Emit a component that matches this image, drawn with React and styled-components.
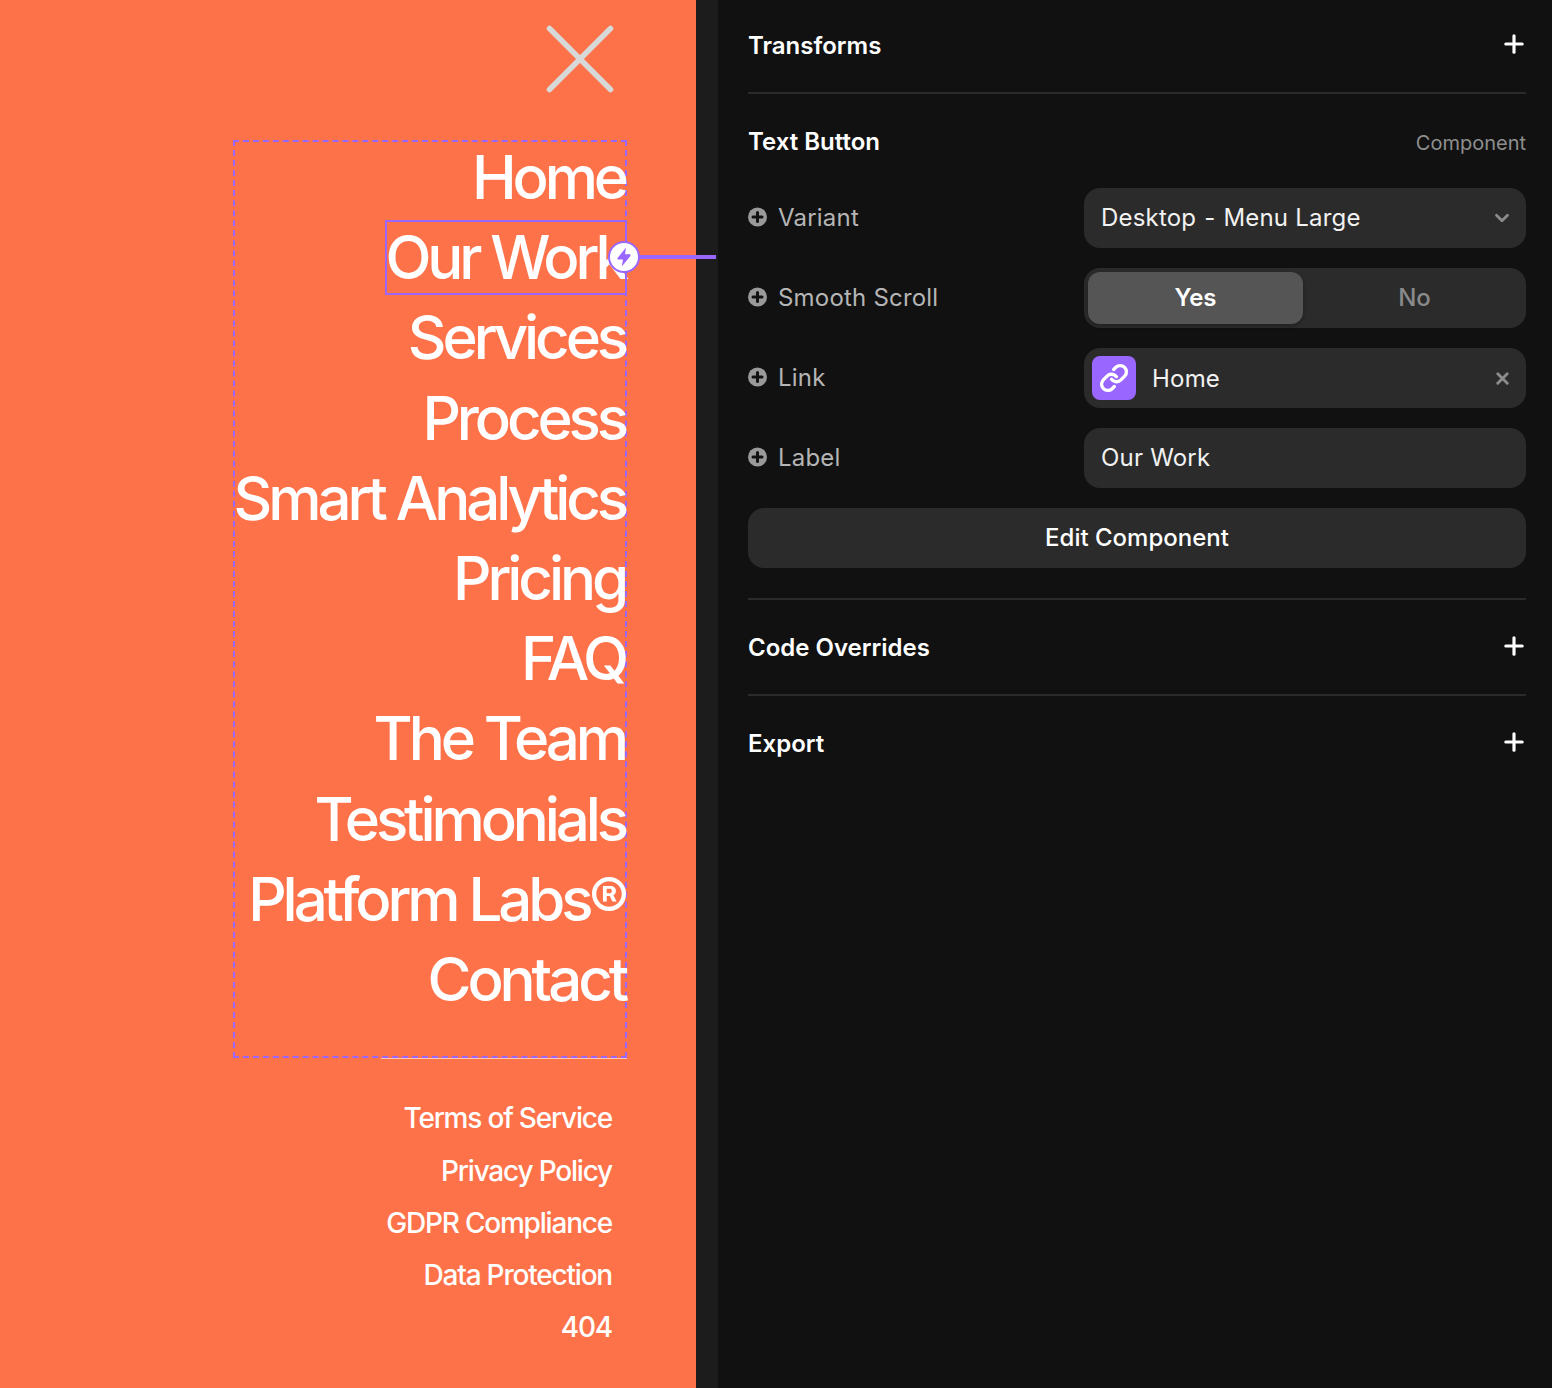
import styled, { createGlobalStyle } from "styled-components";
import { Plus, ChevronDown, X, Link } from "lucide-react";

const GlobalStyle = createGlobalStyle`
  html, body {
    margin: 0;
    padding: 0;
    background: #111111;
    font-family: "Inter", "Liberation Sans", sans-serif;
  }
`;

const Page = styled.div`
  width: 1552px;
  height: 1388px;
  display: flex;
  overflow: hidden;
`;

const Preview = styled.div`
  position: relative;
  width: 696px;
  flex-shrink: 0;
  background: #fe724a;
  display: flex;
  flex-direction: column;
  align-items: flex-end;
`;

const CloseButton = styled.svg`
  display: block;
  width: 72px;
  height: 72px;
  margin: 23px 80px 0 0;
`;

const MenuBox = styled.div`
  position: relative;
  box-sizing: border-box;
  width: 394px;
  height: 918px;
  margin: 45px 69px 0 0;
  border: 2px dashed #9966ff;
  display: flex;
  flex-direction: column;
  align-items: flex-end;
`;

const MenuItem = styled.div`
  position: relative;
  height: 80.2px;
  line-height: 72px;
  margin-top: ${(p) => (p.$first ? "-1px" : "0")};
  margin-right: -2px;
  padding-right: 2px;
  font-size: 60px;
  font-weight: 450;
  letter-spacing: -4.1px;
  color: #ffffff;
  white-space: nowrap;
`;

const Selection = styled.div`
  position: absolute;
  left: 0;
  right: 0;
  top: -1px;
  height: 75px;
  box-sizing: border-box;
  border: 2px solid #9966ff;
`;

const MenuBaseline = styled.div`
  position: absolute;
  right: -2px;
  bottom: -3px;
  width: 246px;
  height: 1px;
  background: #ffc9b6;
`;

const Bolt = styled.div`
  position: absolute;
  right: -13px;
  top: 20px;
  width: 32px;
  height: 32px;
  box-sizing: border-box;
  border-radius: 50%;
  background: #ffffff;
  border: 2px solid #9966ff;
  display: flex;
  align-items: center;
  justify-content: center;
`;

const Connector = styled.div`
  position: absolute;
  left: 640px;
  top: 255px;
  width: 76px;
  height: 4px;
  background: #9966ff;
  z-index: 2;
`;

const FooterLinks = styled.div`
  margin: 34.3px 84px 0 0;
  display: flex;
  flex-direction: column;
  align-items: flex-end;
`;

const FooterLink = styled.div`
  height: 52.3px;
  line-height: 52px;
  font-size: 28px;
  font-weight: 520;
  letter-spacing: -1.2px;
  color: #ffffff;
  white-space: nowrap;
`;

const Gutter = styled.div`
  width: 22px;
  flex-shrink: 0;
  background: #1c1c1c;
`;

const Panel = styled.div`
  flex: 1;
  box-sizing: border-box;
  padding: 0 26px 0 30px;
  background: #111111;
  color: #ffffff;
  font-size: 24px;
`;

const Section = styled.div`
  padding: ${(p) => p.$padding || "0"};
  border-bottom: ${(p) => (p.$last ? "none" : "2px solid #2b2b2b")};
`;

const SectionHead = styled.div`
  display: flex;
  align-items: center;
  justify-content: space-between;
  box-sizing: border-box;
  height: ${(p) => p.$height || 92}px;
  padding-bottom: ${(p) => p.$lift || 0}px;
`;

const SectionTitle = styled.div`
  font-size: 24px;
  font-weight: 600;
`;

const Hint = styled.div`
  margin-top: 3px;
  font-size: 20px;
  color: #8f8f8f;
`;

const Rows = styled.div`
  display: flex;
  flex-direction: column;
  gap: 20px;
`;

const Row = styled.div`
  display: flex;
  align-items: center;
  height: 60px;
`;

const RowLabel = styled.div`
  width: 336px;
  flex-shrink: 0;
  box-sizing: border-box;
  padding-bottom: 2px;
  display: flex;
  align-items: center;
  gap: 10px;
  color: #b5b5b5;
  letter-spacing: 0.2px;
`;

const Field = styled.div`
  flex: 1;
  height: 60px;
  box-sizing: border-box;
  border-radius: 16px;
  background: #2b2b2b;
  display: flex;
  align-items: center;
  gap: ${(p) => p.$gap || 0}px;
  padding: ${(p) => p.$padding || "0 13px 0 17px"};
  letter-spacing: 0.2px;
  color: #f2f2f2;
`;

const FieldText = styled.div`
  flex: 1;
  padding-bottom: ${(p) => (p.$flush ? 0 : 2)}px;
  white-space: pre;
`;

const Dash = styled.span`
  margin: 0 1px;
`;

const Segment = styled.div`
  flex: 1;
  height: 52px;
  padding-bottom: 2px;
  box-sizing: border-box;
  border-radius: 12px;
  display: flex;
  align-items: center;
  justify-content: center;
  font-weight: ${(p) => (p.$active ? 600 : 500)};
  letter-spacing: 0;
  color: ${(p) => (p.$active ? "#ffffff" : "#8a8a8a")};
  background: ${(p) => (p.$active ? "#555555" : "transparent")};
  box-shadow: ${(p) => (p.$active ? "0 2px 4px rgba(0,0,0,0.25)" : "none")};
`;

const LinkTile = styled.div`
  width: 44px;
  height: 44px;
  margin-right: 16px;
  border-radius: 8px;
  background: #9966ff;
  display: flex;
  align-items: center;
  justify-content: center;
`;

const EditButton = styled.div`
  height: 60px;
  margin-top: 20px;
  padding-bottom: 2px;
  box-sizing: border-box;
  border-radius: 16px;
  background: #2b2b2b;
  display: flex;
  align-items: center;
  justify-content: center;
  font-weight: 500;
`;

const PlusIcon = styled(Plus)`
  margin: 0 -1.5px 2px 0;
`;

const AddDot = () => (
  <svg width="20" height="20" viewBox="0 0 20 20">
    <circle cx="9.5" cy="10" r="9.5" fill="#999999" />
    <path d="M9.5 5.5v9M5 10h9" stroke="#111111" strokeWidth="3" strokeLinecap="round" />
  </svg>
);

const menu = ["Home", "Our Work", "Services", "Process", "Smart Analytics", "Pricing", "FAQ", "The Team", "Testimonials", "Platform Labs®", "Contact"];
const footer = ["Terms of Service", "Privacy Policy", "GDPR Compliance", "Data Protection", "404"];

const App = () => {
  return (
    <Page>
      <GlobalStyle />
      <Preview>
        <CloseButton viewBox="0 0 72 72" fill="none">
          <path d="M5.5 5.5L66.5 66.5M66.5 5.5L5.5 66.5" stroke="#d8d8d8" strokeWidth="5.5" strokeLinecap="round" />
        </CloseButton>
        <MenuBox>
          {menu.map((item, i) => (
            <MenuItem key={item} $first={i === 0}>
              {item}
              {item === "Our Work" && (
                <>
                  <Selection />
                  <Bolt>
                    <svg width="20" height="22" viewBox="0 0 20 22">
                      <path d="M12 1.5L3.6 12c-.5.7-.1 1.6.8 1.6H9L7.8 20.5l8.6-10.6c.5-.7.1-1.6-.8-1.6H11L12 1.5z" fill="#9966ff" />
                    </svg>
                  </Bolt>
                </>
              )}
            </MenuItem>
          ))}
          <MenuBaseline />
        </MenuBox>
        <FooterLinks>
          {footer.map((item) => (
            <FooterLink key={item}>{item}</FooterLink>
          ))}
        </FooterLinks>
        <Connector />
      </Preview>
      <Gutter />
      <Panel>
        <Section>
          <SectionHead $lift={2}>
            <SectionTitle>Transforms</SectionTitle>
            <PlusIcon size={28} strokeWidth={2.7} color="#ffffff" />
          </SectionHead>
        </Section>
        <Section $padding="0 0 30px">
          <SectionHead $height={94}>
            <SectionTitle>Text Button</SectionTitle>
            <Hint>Component</Hint>
          </SectionHead>
          <Rows>
            <Row>
              <RowLabel>
                <AddDot />
                Variant
              </RowLabel>
              <Field>
                <FieldText>
                  Desktop <Dash>-</Dash> Menu Large
                </FieldText>
                <ChevronDown size={22} strokeWidth={3} color="#8c8c8c" />
              </Field>
            </Row>
            <Row>
              <RowLabel>
                <AddDot />
                Smooth Scroll
              </RowLabel>
              <Field $padding="0 4px" $gap={4}>
                <Segment $active>Yes</Segment>
                <Segment>No</Segment>
              </Field>
            </Row>
            <Row>
              <RowLabel>
                <AddDot />
                Link
              </RowLabel>
              <Field $padding="0 14px 0 8px">
                <LinkTile>
                  <Link size={30} strokeWidth={2.7} color="#ffffff" />
                </LinkTile>
                <FieldText $flush>Home</FieldText>
                <X size={19} strokeWidth={3.6} color="#8c8c8c" />
              </Field>
            </Row>
            <Row>
              <RowLabel>
                <AddDot />
                Label
              </RowLabel>
              <Field>
                <FieldText>Our Work</FieldText>
              </Field>
            </Row>
          </Rows>
          <EditButton>Edit Component</EditButton>
        </Section>
        <Section>
          <SectionHead $height={94}>
            <SectionTitle>Code Overrides</SectionTitle>
            <PlusIcon size={28} strokeWidth={2.7} color="#ffffff" />
          </SectionHead>
        </Section>
        <Section $last>
          <SectionHead $height={94}>
            <SectionTitle>Export</SectionTitle>
            <PlusIcon size={28} strokeWidth={2.7} color="#ffffff" />
          </SectionHead>
        </Section>
      </Panel>
    </Page>
  );
};

export default App;
